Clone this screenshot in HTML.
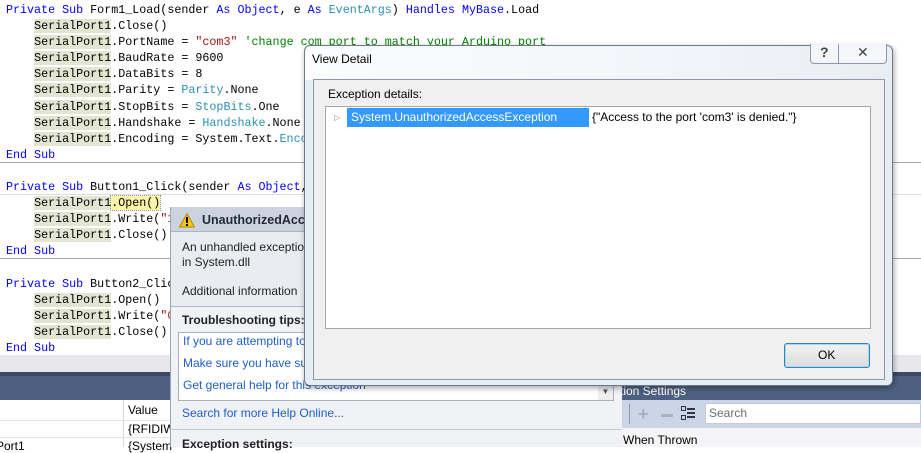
<!DOCTYPE html>
<html><head><meta charset="utf-8"><style>
*{margin:0;padding:0;box-sizing:border-box}
body{width:921px;height:447px;overflow:hidden;background:#fff;position:relative;font-family:"Liberation Sans",sans-serif}
.code{position:absolute;left:6px;top:2px;font-family:"Liberation Mono",monospace;font-size:11.7px;line-height:16.1px;white-space:pre;color:#000}
.k{color:#0000ff}.t{color:#2b91af}.s{color:#a31515}.c{color:#008000}
.h{background:#e2e5d2}
.y{background:#fbf3a6;outline:1px dotted #999}
.abs{position:absolute}
.sf{font-family:"Liberation Sans",sans-serif;font-size:12px}
.lnk{color:#1e5ec8}
</style></head><body>
<div class="abs" style="left:0;top:162px;width:921px;height:1px;background:#a8a8a8"></div>
<div class="abs" style="left:0;top:194px;width:921px;height:1px;background:#dcdce6"></div>
<div class="abs" style="left:0;top:258px;width:921px;height:1px;background:#a8a8a8"></div>
<div class="code"><span class="k">Private Sub</span> Form1_Load(sender <span class="k">As</span> <span class="k">Object</span>, e <span class="k">As</span> <span class="t">EventArgs</span>) <span class="k">Handles</span> <span class="k">MyBase</span>.Load
    <span class="h">SerialPort1</span>.Close()
    <span class="h">SerialPort1</span>.PortName = <span class="s">"com3"</span> <span class="c">'change com port to match your Arduino port</span>
    <span class="h">SerialPort1</span>.BaudRate = 9600
    <span class="h">SerialPort1</span>.DataBits = 8
    <span class="h">SerialPort1</span>.Parity = <span class="t">Parity</span>.None
    <span class="h">SerialPort1</span>.StopBits = <span class="t">StopBits</span>.One
    <span class="h">SerialPort1</span>.Handshake = <span class="t">Handshake</span>.None
    <span class="h">SerialPort1</span>.Encoding = System.Text.<span class="t">Encoding</span>
<span class="k">End Sub</span>

<span class="k">Private Sub</span> Button1_Click(sender <span class="k">As</span> <span class="k">Object</span>,
    <span class="h">SerialPort1</span><span class="y">.Open()</span>
    <span class="h">SerialPort1</span>.Write(<span class="s">"1"</span>)
    <span class="h">SerialPort1</span>.Close()
<span class="k">End Sub</span>

<span class="k">Private Sub</span> Button2_Click
    <span class="h">SerialPort1</span>.Open()
    <span class="h">SerialPort1</span>.Write(<span class="s">"0"</span>)
    <span class="h">SerialPort1</span>.Close()
<span class="k">End Sub</span></div>

<!-- bottom area -->
<div class="abs" style="left:0;top:355px;width:921px;height:17px;background:#e8e8ec"></div>
<div class="abs" style="left:0;top:372px;width:921px;height:4px;background:#3c4a66"></div>
<div class="abs" style="left:0;top:376px;width:921px;height:24px;background:#4d6082"></div>
<div class="abs" style="left:0;top:400px;width:170px;height:47px;background:#fff"></div>
<div class="abs" style="left:123px;top:400px;width:1px;height:47px;background:#d8d8d8"></div>
<div class="abs" style="left:0;top:420px;width:170px;height:1px;background:#e4e4e4"></div>
<div class="abs" style="left:0;top:437px;width:170px;height:1px;background:#e4e4e4"></div>
<div class="abs sf" style="left:128px;top:403px">Value</div>
<div class="abs sf" style="left:128px;top:422px">{RFIDIW</div>
<div class="abs sf" style="left:-4px;top:439px">Port1</div>
<div class="abs sf" style="left:128px;top:439px">{System</div>

<div class="abs sf" style="left:620px;top:384px;color:#fff">tion Settings</div>
<div class="abs" style="left:620px;top:400px;width:301px;height:28px;background:#ccd5e6"></div>
<div class="abs" style="left:629px;top:404px;width:1px;height:20px;background:#8a96aa"></div>
<div class="abs" style="left:638px;top:405px;font-size:18px;color:#a9b1bf;font-weight:bold;line-height:18px">+</div>
<div class="abs" style="left:661px;top:414px;width:12px;height:3px;background:#a9b1bf"></div>
<div class="abs" style="left:681px;top:406px;width:14px;height:14px">
<svg width="14" height="14"><rect x="0.5" y="0.5" width="4" height="4" fill="none" stroke="#334" /><rect x="0.5" y="9.5" width="4" height="4" fill="none" stroke="#334"/><rect x="6" y="2" width="8" height="2" fill="#334"/><rect x="6" y="6" width="8" height="2" fill="#334"/><rect x="6" y="10" width="8" height="2" fill="#334"/></svg></div>
<div class="abs" style="left:705px;top:403px;width:216px;height:21px;background:#fff;border:1px solid #c4cad6"></div>
<div class="abs sf" style="left:709px;top:406px;color:#6d6d6d">Search</div>
<div class="abs" style="left:620px;top:428px;width:301px;height:19px;background:#f5f5f7"></div>
<div class="abs sf" style="left:623px;top:433px">When Thrown</div>

<!-- exception helper -->
<div class="abs" style="left:170px;top:207px;width:452px;height:240px;background:#e9ecf1;border-left:1px solid #9aa4b4"></div>
<div class="abs" style="left:171px;top:207px;width:451px;height:25px;background:#ccd3df;border-bottom:1px solid #aab3c2"></div>
<svg class="abs" style="left:179px;top:213px" width="16" height="15"><path d="M8 0.5 L15.5 14 L0.5 14 Z" fill="#f7c600" stroke="#b48a00"/><rect x="7" y="4" width="2" height="6" fill="#000"/><rect x="7" y="11" width="2" height="2" fill="#000"/></svg>
<div class="abs sf" style="left:202px;top:213px;font-weight:bold;font-size:12.5px;color:#1e2a3a">UnauthorizedAccessException</div>
<div class="abs sf" style="left:182px;top:240px;line-height:15px;color:#222">An unhandled exception of type<br>in System.dll</div>
<div class="abs sf" style="left:182px;top:284px;color:#222">Additional information</div>
<div class="abs" style="left:171px;top:306px;width:451px;height:1px;background:#b0b8c6"></div>
<div class="abs" style="left:171px;top:307px;width:451px;height:140px;background:#f0f2f5"></div>
<div class="abs sf" style="left:182px;top:313px;font-weight:bold;color:#222">Troubleshooting tips:</div>
<div class="abs" style="left:178px;top:332px;width:436px;height:69px;background:#fff;border:1px solid #aab0ba"></div>
<div class="abs sf lnk" style="left:183px;top:334px">If you are attempting to</div>
<div class="abs sf lnk" style="left:183px;top:356px">Make sure you have sufficient</div>
<div class="abs sf lnk" style="left:183px;top:378px">Get general help for this exception</div>
<div class="abs" style="left:598px;top:383px;width:15px;height:17px;background:#eee;font-size:8px;color:#555;text-align:center;line-height:17px">▼</div>
<div class="abs sf lnk" style="left:182px;top:406px">Search for more Help Online...</div>
<div class="abs" style="left:171px;top:429px;width:451px;height:1px;background:#c4c8d0"></div>
<div class="abs sf" style="left:182px;top:437px;font-weight:bold;color:#222">Exception settings:</div>

<!-- View Detail dialog -->
<div class="abs" style="left:304px;top:45px;width:589px;height:341px;background:#e6edf5;border:1px solid #6e7a8a;border-radius:6px;box-shadow:1px 2px 6px rgba(0,0,0,.35)"></div>
<div class="abs" style="left:305px;top:46px;width:587px;height:34px;background:linear-gradient(90deg,#fbfcfd,#f2f5f9 60%,#e9eef4);border-radius:6px 6px 0 0"></div>
<div class="abs sf" style="left:312px;top:52px;color:#000">View Detail</div>
<div class="abs" style="left:810px;top:44px;width:77px;height:20px;background:#f4f6f9;border:1px solid #8f98a6;border-top:none;border-radius:0 0 4px 4px"></div>
<div class="abs" style="left:838px;top:44px;width:1px;height:20px;background:#8f98a6"></div>
<div class="abs" style="left:820px;top:44px;font-size:14px;color:#444;font-weight:bold">?</div>
<div class="abs" style="left:857px;top:44px;font-size:14px;color:#444">✕</div>
<div class="abs" style="left:313px;top:79px;width:572px;height:301px;background:#f0f0f0;border:1px solid #8d97a5"></div>
<div class="abs sf" style="left:328px;top:87px">Exception details:</div>
<div class="abs" style="left:325px;top:106px;width:546px;height:223px;background:#fff;border:1px solid #a8a8a8"></div>
<div class="abs" style="left:334px;top:113px;font-size:8px;color:#888">▷</div>
<div class="abs" style="left:347px;top:108px;width:242px;height:19px;background:#3399ff"></div>
<div class="abs sf" style="left:351px;top:110px;color:#fff">System.UnauthorizedAccessException</div>
<div class="abs sf" style="left:592px;top:110px">{"Access to the port 'com3' is denied."}</div>
<div class="abs" style="left:784px;top:343px;width:86px;height:25px;background:linear-gradient(#f2f2f2,#dcdcdc);border:1px solid #3c7fb1;border-radius:3px;box-shadow:inset 0 0 0 1px #9ddcff"></div>
<div class="abs sf" style="left:818px;top:348px">OK</div>
</body></html>
